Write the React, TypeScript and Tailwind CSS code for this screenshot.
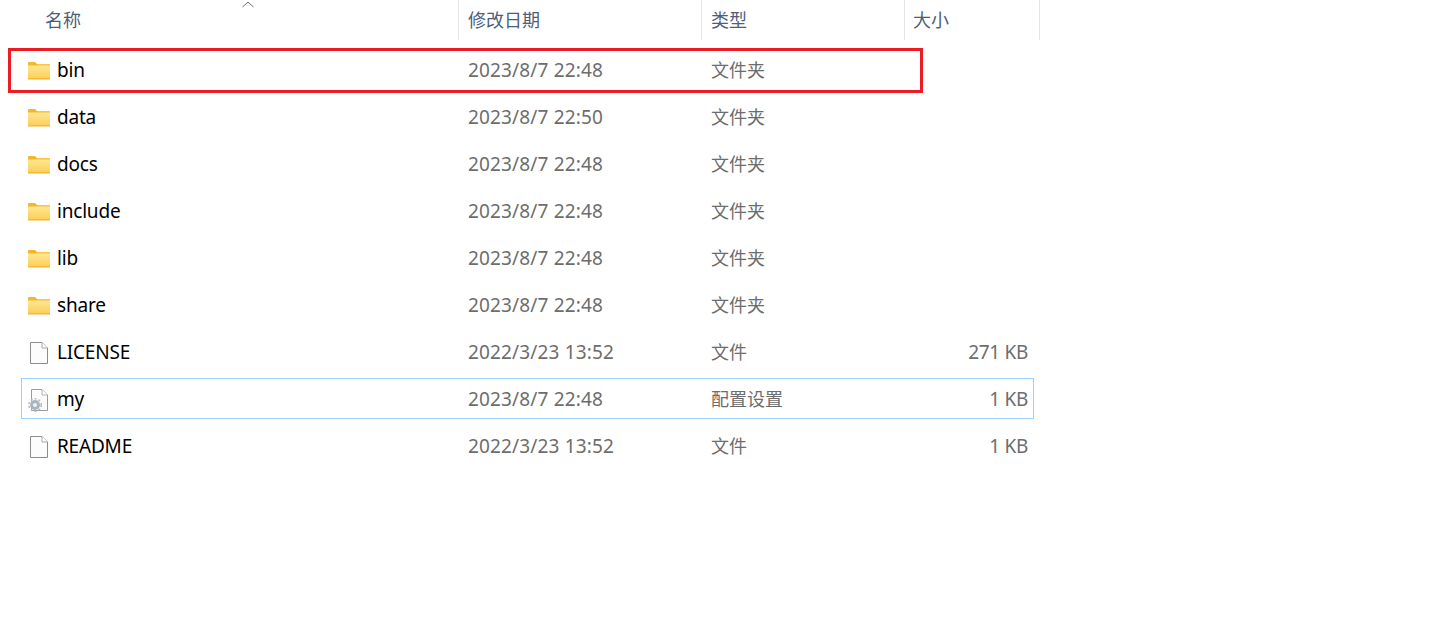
const FONT = "font-['Noto_Sans','Noto_Sans_CJK_SC',sans-serif]";

function Folder() {
  return (
    <svg width="22" height="18" viewBox="1 1.5 22 18" className="shrink-0">
      <defs>
        <linearGradient id="fg" x1="0" y1="0" x2="0" y2="1">
          <stop offset="0" stopColor="#ffe692" />
          <stop offset="1" stopColor="#fcd05c" />
        </linearGradient>
      </defs>
      <path d="M1 2.5 Q1 1.5 2 1.5 H8 L10 3.5 H23 V19 H1 Z" fill="#f4b62b" />
      <rect x="1" y="5" width="22" height="12.6" fill="url(#fg)" />
      <rect x="10" y="4" width="13" height="1" fill="#fbd567" />
    </svg>
  );
}

function FileIcon() {
  return (
    <svg width="24" height="24" viewBox="0 0 24 24" className="shrink-0">
      <path d="M3.5 1.5 H15 L20.5 7 V22.5 H3.5 Z" fill="#fcfcfc" stroke="#8c8c8c" />
      <path d="M15 1.5 V7 H20.5" fill="#fff" stroke="#a8a8a8" />
    </svg>
  );
}

function ConfigIcon() {
  return (
    <svg width="24" height="24" viewBox="0 0 24 24" className="shrink-0">
      <path d="M4.5 1.5 H15 L20.5 7 V22.5 H4.5 Z" fill="#fcfcfc" stroke="#9a9a9a" />
      <path d="M15 1.5 V7 H20.5" fill="#fff" stroke="#b0b0b0" />
      <circle cx="8" cy="17" r="5" fill="#aab4bd" />
      <circle cx="8" cy="17" r="6.2" fill="none" stroke="#b4bdc5" strokeWidth="1.6" strokeDasharray="2 2" />
      <circle cx="8" cy="17" r="2" fill="#eef1f3" />
    </svg>
  );
}

type Row = { name: string; date: string; type: string; size?: string; icon: "folder" | "file" | "config"; selected?: boolean };

const rows: Row[] = [
  { name: "bin", date: "2023/8/7 22:48", type: "文件夹", icon: "folder" },
  { name: "data", date: "2023/8/7 22:50", type: "文件夹", icon: "folder" },
  { name: "docs", date: "2023/8/7 22:48", type: "文件夹", icon: "folder" },
  { name: "include", date: "2023/8/7 22:48", type: "文件夹", icon: "folder" },
  { name: "lib", date: "2023/8/7 22:48", type: "文件夹", icon: "folder" },
  { name: "share", date: "2023/8/7 22:48", type: "文件夹", icon: "folder" },
  { name: "LICENSE", date: "2022/3/23 13:52", type: "文件", size: "271 KB", icon: "file" },
  { name: "my", date: "2023/8/7 22:48", type: "配置设置", size: "1 KB", icon: "config", selected: true },
  { name: "README", date: "2022/3/23 13:52", type: "文件", size: "1 KB", icon: "file" },
];

function Icon({ kind }: { kind: Row["icon"] }) {
  if (kind === "folder") return <Folder />;
  if (kind === "file") return <FileIcon />;
  return <ConfigIcon />;
}

export default function App() {
  return (
    <div className={`relative h-[639px] w-[1447px] overflow-hidden bg-white text-[19px] ${FONT}`}>
      <div className="flex h-10 w-[1040px] text-[18px] text-[#4c607a]">
        <div className="relative flex w-[459px] items-center border-r border-[#e5e5e5] pl-[45px]">
          名称
          <svg width="12" height="7" viewBox="0 0 12 7" className="absolute left-[242px] top-[1px]">
            <path d="M0.5 6 L6 1 L11.5 6" fill="none" stroke="#6d6d6d" />
          </svg>
        </div>
        <div className="flex w-[243px] items-center border-r border-[#e5e5e5] pl-[9px]">修改日期</div>
        <div className="flex w-[203px] items-center border-r border-[#e5e5e5] pl-[9px]">类型</div>
        <div className="flex w-[135px] items-center border-r border-[#e5e5e5] pl-[8px]">大小</div>
      </div>

      <div className="mt-[9px] ml-[21px] flex w-[1013px] flex-col gap-[6px]">
        {rows.map((r) => (
          <div
            key={r.name}
            className={`flex h-[41px] items-center border pt-[2px] ${r.selected ? "border-[#99d1ff]" : "border-transparent"}`}
          >
            <div className="flex w-[437px] items-center pl-[5px] text-black">
              <div className="flex w-[24px] shrink-0 justify-center">
                <Icon kind={r.icon} />
              </div>
              <span className="pl-[6px] tracking-[-0.2px]">{r.name}</span>
            </div>
            <div className="w-[243px] pl-[9px] tracking-[0.15px] text-[#6d6d6d]">{r.date}</div>
            <div className="w-[203px] pl-[9px] text-[18px] text-[#6d6d6d]">{r.type}</div>
            <div className="flex-1 pr-[5px] text-right tracking-[-0.3px] text-[#6d6d6d]">{r.size}</div>
          </div>
        ))}
      </div>

      <div className="absolute left-[8px] top-[48px] h-[45px] w-[915px] border-[3px] border-[#ed1c24]" />
    </div>
  );
}
